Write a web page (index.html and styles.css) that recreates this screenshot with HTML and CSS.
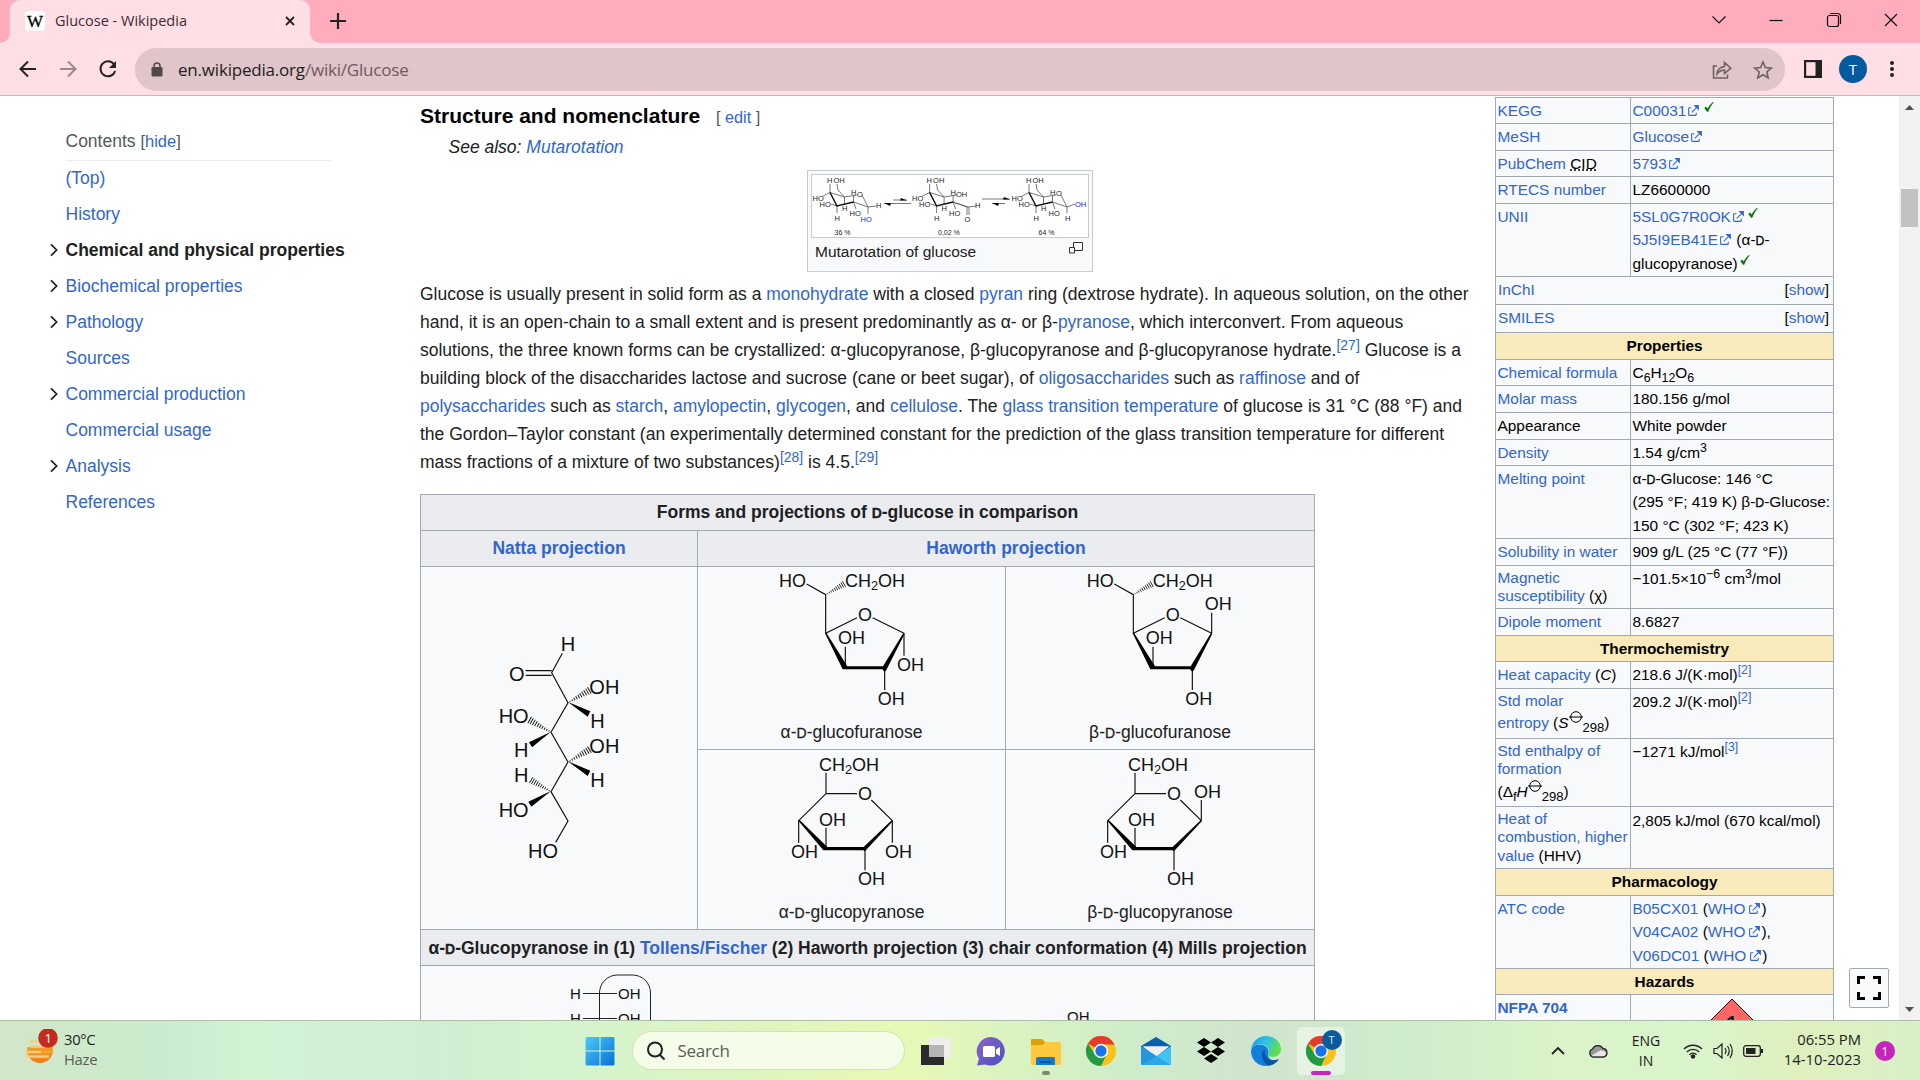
FILE: index.html
```html
<!DOCTYPE html>
<html lang="en">
<head>
<meta charset="utf-8">
<title>Glucose - Wikipedia</title>
<link rel="stylesheet" href="styles.css">
</head>
<body>
<svg class="defs" width="0" height="0" aria-hidden="true">
  <defs>
    <symbol id="ext" viewBox="0 0 12 12"><path fill="#36c" d="M6 1h5v5L8.86 3.85 4.7 8 4 7.3l4.15-4.16zM2 3h2v1H2v6h6V8h1v2a1 1 0 0 1-1 1H2a1 1 0 0 1-1-1V4a1 1 0 0 1 1-1"/></symbol>
    <symbol id="tick" viewBox="0 0 10 10"><path fill="#0a7a0a" d="M.3 6 2 4.400 3.600 6.600 C5 4 6.600 1.800 8.800 0 L9.700.4 C7.400 3.200 5.600 6 4.200 9.800 L3 9.800z"/></symbol>
    <symbol id="chev" viewBox="0 0 10 16"><path fill="none" stroke="#202122" stroke-width="2" d="M1.500 1.500 8 8 1.500 14.500"/></symbol>
    <g id="hash"><path stroke="#111" stroke-width="2.800" d="M7-2V2M14.500-3V3M22-4V4M29.500-5V5M37-6V6M44.500-7V7M52-8V8M59.500-9V9M67-10V10M74-11V11"/></g>
    <g id="furanose" class="haworth">
      <text x="1107" y="290">HO</text><text x="1305" y="290">CH<tspan class="sub" dy="9">2</tspan><tspan dy="-9">OH</tspan></text>
      <text x="1344" y="394">O</text><text x="1284" y="463">OH</text><text x="1403" y="645">OH</text>
      <path class="bond" d="M1190 282 1247 314V430L1341 383M1388 383 1482 430M1306 470V533M1424 535V600"/>
      <use href="#hash" transform="translate(1247 314) rotate(-30) scale(.86)"/>
      <path class="wedge" d="M1245 430 1249 428 1312 529H1419L1480 429 1484 431 1429 540 1424 546 1417 538H1298z"/>
    </g>
    <g id="pyranose" class="haworth">
      <text x="1227" y="842">CH<tspan class="sub" dy="9">2</tspan><tspan dy="-9">OH</tspan></text>
      <text x="1344" y="930">O</text><text x="1227" y="1007">OH</text><text x="1143" y="1103">OH</text><text x="1344" y="1186">OH</text>
      <path class="bond" d="M1248 848V911H1341M1384 930 1447 992M1248 911 1166 992V1058M1248 1013V1074M1365 1076V1141"/>
      <path class="wedge" d="M1165 992 1169 990 1252 1071H1361L1445 991 1449 993 1371 1077 1365 1084 1360 1081H1240z"/>
    </g>
    <g id="chair" class="chair">
      <text x="827" y="183">H</text><text x="833.500" y="182.500">OH</text><text x="812.500" y="200.500">HO</text><text x="819.500" y="207">HO</text>
      <text x="834.500" y="220.500">H</text><text x="842" y="211">H</text><text x="849.500" y="216">HO</text><text x="851" y="194.500">H</text>
      <path class="thin" d="M830 184V192.500M837 184 838 190 844.500 197 830 192.500 823 196M844.500 197V205M853.500 195V202L856 209M853.500 202 868 207M837 206V213M837 206 831 204M844.500 197 857 195"/>
      <path class="thick" d="M830 192.500 837 206 853.500 202"/>
    </g>
    <g id="chromeLogo">
      <circle cx="15" cy="15" r="15" fill="#fbc116"/>
      <path fill="#e33b2e" d="M15 15 2 7.500A15 15 0 0 1 28 7.500L28.500 8.500H15z"/>
      <path fill="#239a46" d="M2 7.500A15 15 0 0 0 15 30L20.600 18.500 15 15 8.500 18z"/>
      <circle cx="15" cy="15" r="7.200" fill="#fff"/><circle cx="15" cy="15" r="5.700" fill="#1a73e8"/>
    </g>
  </defs>
</svg>

<header class="tabs">
  <div class="tab">
    <svg class="favicon" viewBox="0 0 20 20"><rect width="20" height="20" rx="3.500" fill="#fff"/><text x="10" y="15.500" text-anchor="middle">W</text></svg>
    <span class="tab-title">Glucose - Wikipedia</span>
    <svg width="10" height="10" viewBox="0 0 10 10"><path d="M1 1 9 9M9 1 1 9" stroke="#222" stroke-width="1.800"/></svg>
  </div>
  <svg class="plus" width="16" height="16" viewBox="0 0 16 16"><path d="M8 0V16M0 8H16" stroke="#222" stroke-width="2.200"/></svg>
  <div class="window-buttons">
    <svg viewBox="0 0 16 16"><path d="M1.500 4.500 8 11 14.500 4.500"/></svg>
    <svg viewBox="0 0 16 16"><path d="M1.500 8.500H14.500"/></svg>
    <svg viewBox="0 0 16 16"><rect x="1.500" y="3.500" width="11" height="11" rx="2"/><path d="M4 1.500H11.500A3 3 0 0 1 14.500 4.500V12"/></svg>
    <svg viewBox="0 0 16 16"><path d="M2 2 14 14M14 2 2 14"/></svg>
  </div>
</header>
<nav class="toolbar">
  <svg class="nav-icon" viewBox="0 0 20 20"><path d="M18 10H3M10 2.500 2.500 10 10 17.500"/></svg>
  <svg class="nav-icon faded" viewBox="0 0 20 20"><path d="M2 10H17M10 2.500 17.500 10 10 17.500"/></svg>
  <svg class="nav-icon" viewBox="0 0 20 20"><path d="M16 5.200A7.500 7.500 0 1 0 17.200 12"/><path d="M18 2V9H11z" fill="#222" stroke="none"/></svg>
  <div class="omnibox">
    <svg class="lock" viewBox="0 0 12 15"><rect x=".5" y="5" width="11" height="9.500" rx="1.300" fill="#50494c"/><path d="M3 6V4a3 3 0 0 1 6 0V6" fill="none" stroke="#50494c" stroke-width="1.500"/></svg>
    <span class="url">en.wikipedia.org<span>/wiki/Glucose</span></span>
    <svg class="share" viewBox="0 0 20 18"><path d="M5 5H1.500V17H15.500V13.500M5 13C5.500 8.500 8 6 12.500 5.500V1.500L18.800 7.200 12.500 12.500V9C9 9 7 10.500 5 13z"/></svg>
    <svg class="star" viewBox="0 0 20 20"><path d="M10 2 12.400 7.500 18.300 8.100 13.800 12 15.200 17.900 10 14.800 4.800 17.900 6.200 12 1.700 8.100 7.600 7.500z"/></svg>
  </div>
  <svg class="panel" viewBox="0 0 18 18"><path fill="#222" d="M0 0H18V18H0z"/><path fill="#ffdfe5" d="M2.200 2.200H11.500V15.800H2.200z"/></svg>
  <span class="avatar">T</span>
  <svg class="dots" viewBox="0 0 6 18"><circle cx="3" cy="3" r="2"/><circle cx="3" cy="9" r="2"/><circle cx="3" cy="15" r="2"/></svg>
</nav>

<main class="page">
  <aside class="toc">
    <div class="toc-head">Contents <span>[<a>hide</a>]</span></div>
    <ul>
      <li><i></i><a>(Top)</a></li>
      <li><i></i><a>History</a></li>
      <li class="current"><i><svg><use href="#chev"/></svg></i>Chemical and physical properties</li>
      <li><i><svg><use href="#chev"/></svg></i><a>Biochemical properties</a></li>
      <li><i><svg><use href="#chev"/></svg></i><a>Pathology</a></li>
      <li><i></i><a>Sources</a></li>
      <li><i><svg><use href="#chev"/></svg></i><a>Commercial production</a></li>
      <li><i></i><a>Commercial usage</a></li>
      <li><i><svg><use href="#chev"/></svg></i><a>Analysis</a></li>
      <li><i></i><a>References</a></li>
    </ul>
  </aside>

  <article class="article">
    <h3>Structure and nomenclature <span>[ <a>edit</a> ]</span></h3>
    <div class="hatnote">See also: <a>Mutarotation</a></div>
    <figure>
      <svg class="thumb" viewBox="812 175 276 62">
        <use href="#chair"/><use href="#chair" x="99.600"/><use href="#chair" x="199"/>
        <path class="thin" d="M862 195 868 207 876 206M868 207V214M1061 195 1067 207 1075 204M1067 207V213M952.500 202 968 207 976 206M967 207V215M969 207V215M893 200H907M911 203.500H884M982 199H1010M1005 203.500H992"/>
        <path d="M907 200.500H900L901 198zM884 203H891L890 206zM1010 199.500H1003L1004 197zM992 203H999L998 206z"/>
        <g class="chair">
        <text x="857" y="196.500">O</text><text x="876" y="208">H</text><text x="860.500" y="221.500" class="blue">HO</text>
        <text x="956" y="196.500">OH</text><text x="975" y="208">H</text><text x="964.500" y="221.500">O</text>
        <text x="1056" y="195.500">O</text><text x="1065" y="220.500">H</text><text x="1075" y="207" class="blue">OH</text>
        <text x="834.500" y="235" class="pct">36 %</text><text x="938" y="235" class="pct">0,02 %</text><text x="1038.500" y="235" class="pct">64 %</text>
        </g>
      </svg>
      <figcaption>Mutarotation of glucose
        <svg width="14" height="12" viewBox="0 0 14 12" fill="#f8f9fa" stroke="#333"><path d="M4.500.5H13.500V8.500H4.500z"/><path d="M.5 5.500H5.500V11H.5z"/></svg>
      </figcaption>
    </figure>
    <p>Glucose is usually present in solid form as a <a>monohydrate</a> with a closed <a>pyran</a> ring (dextrose hydrate). In aqueous solution, on the other<br>
    hand, it is an open-chain to a small extent and is present predominantly as α- or β-<a>pyranose</a>, which interconvert. From aqueous<br>
    solutions, the three known forms can be crystallized: α-glucopyranose, β-glucopyranose and β-glucopyranose hydrate.<sup>[27]</sup> Glucose is a<br>
    building block of the disaccharides lactose and sucrose (cane or beet sugar), of <a>oligosaccharides</a> such as <a>raffinose</a> and of<br>
    <a>polysaccharides</a> such as <a>starch</a>, <a>amylopectin</a>, <a>glycogen</a>, and <a>cellulose</a>. The <a>glass transition temperature</a> of glucose is 31 °C (88 °F) and<br>
    the Gordon–Taylor constant (an experimentally determined constant for the prediction of the glass transition temperature for different<br>
    mass fractions of a mixture of two substances)<sup>[28]</sup> is 4.5.<sup>[29]</sup></p>

    <section class="forms">
      <div class="th wide">Forms and projections of <small>D</small>-glucose in comparison</div>
      <div class="th"><a>Natta projection</a></div>
      <div class="th span2"><a>Haworth projection</a></div>
      <div class="td natta">
        <svg width="276" height="362" viewBox="33 231 828 1086">
          <text x="452" y="484">H</text><text x="297" y="572">O</text><text x="538" y="611">OH</text><text x="541" y="713">H</text>
          <text x="266" y="699">HO</text><text x="312" y="802">H</text><text x="538" y="788">OH</text><text x="541" y="891">H</text>
          <text x="312" y="876">H</text><text x="266" y="980">HO</text><text x="354" y="1105">HO</text>
          <path class="bond" d="M457 490 425 548 474 638 423 727 474 816 423 905 474 993 437 1057M347 542H425M347 556H425"/>
          <path class="wedge" d="M474 636 541 664 533 680zM423 725 357 757 366 772zM474 814 541 842 533 858zM423 903 355 935 364 950z"/>
          <use href="#hash" transform="translate(474 638) rotate(-30)"/><use href="#hash" transform="translate(423 727) rotate(210)"/>
          <use href="#hash" transform="translate(474 816) rotate(-30)"/><use href="#hash" transform="translate(423 905) rotate(210) scale(.93)"/>
        </svg>
      </div>
      <div class="td"><svg class="haworth" width="307" height="150" viewBox="864 231 921 450"><use href="#furanose"/><path class="bond" d="M1482 430V497"/><text x="1461" y="543">OH</text></svg>
        <span>α-<small>D</small>-glucofuranose</span></div>
      <div class="td"><svg class="haworth" width="308" height="150" viewBox="865 231 924 450"><use href="#furanose"/><path class="bond" d="M1482 430V368"/><text x="1461" y="361">OH</text></svg>
        <span>β-<small>D</small>-glucofuranose</span></div>
      <div class="td"><svg class="haworth" width="307" height="147" viewBox="864 780 921 441"><use href="#pyranose"/><path class="bond" d="M1447 992V1058"/><text x="1425" y="1103">OH</text></svg>
        <span>α-<small>D</small>-glucopyranose</span></div>
      <div class="td"><svg class="haworth" width="308" height="147" viewBox="861 780 924 441"><use href="#pyranose"/><path class="bond" d="M1447 992V930"/><text x="1425" y="924">OH</text></svg>
        <span>β-<small>D</small>-glucopyranose</span></div>
      <div class="th wide last">α-<small>D</small>-Glucopyranose in (1)&nbsp;<a>Tollens/Fischer</a>&nbsp;(2) Haworth projection (3) chair conformation (4) Mills projection</div>
      <div class="td wide"><svg class="fischer" width="893" height="54" viewBox="421 966 893 54">
        <rect x="599.500" y="975" width="51" height="90" rx="18" fill="none" stroke="#222"/>
        <path d="M583 993.500H617M583 1018.500H617" stroke="#222"/>
        <text x="570" y="999">H</text><text x="618" y="999">OH</text><text x="570" y="1024">H</text><text x="618" y="1024">OH</text><text x="1067" y="1022">OH</text>
      </svg></div>
    </section>
  </article>

  <aside class="infobox">
    <div class="row" style="height:26px"><div><a>KEGG</a></div><div><a>C00031</a><svg class="ext"><use href="#ext"/></svg> <svg class="tick"><use href="#tick"/></svg></div></div>
    <div class="row" style="height:27px"><div><a>MeSH</a></div><div><a>Glucose</a><svg class="ext"><use href="#ext"/></svg></div></div>
    <div class="row" style="height:26px"><div><a>PubChem</a> <abbr>CID</abbr></div><div><a>5793</a><svg class="ext"><use href="#ext"/></svg></div></div>
    <div class="row" style="height:27px"><div><a>RTECS number</a></div><div>LZ6600000</div></div>
    <div class="row" style="height:73px"><div><a>UNII</a></div><div><a>5SL0G7R0OK</a><svg class="ext"><use href="#ext"/></svg> <svg class="tick"><use href="#tick"/></svg><br><a>5J5I9EB41E</a><svg class="ext"><use href="#ext"/></svg> (α-<small>D</small>-<br>glucopyranose)<svg class="tick close"><use href="#tick"/></svg></div></div>
    <div class="row fold" style="height:28px"><a>InChI</a><span>[<a>show</a>]</span></div>
    <div class="row fold" style="height:28px"><a>SMILES</a><span>[<a>show</a>]</span></div>
    <div class="row title" style="height:27px">Properties</div>
    <div class="row" style="height:26px"><div><a>Chemical formula</a></div><div>C<sub>6</sub>H<sub>12</sub>O<sub>6</sub></div></div>
    <div class="row" style="height:27px"><div><a>Molar mass</a></div><div>180.156 g/mol</div></div>
    <div class="row" style="height:27px"><div>Appearance</div><div>White powder</div></div>
    <div class="row" style="height:26px"><div><a>Density</a></div><div>1.54 g/cm<sup>3</sup></div></div>
    <div class="row" style="height:73px"><div><a>Melting point</a></div><div>α-<small>D</small>-Glucose: 146 °C<br>(295 °F; 419 K) β-<small>D</small>-Glucose:<br>150 °C (302 °F; 423 K)</div></div>
    <div class="row" style="height:27px"><div><a>Solubility in water</a></div><div>909 g/L (25 °C (77 °F))</div></div>
    <div class="row multi" style="height:43px"><div><a>Magnetic<br>susceptibility</a> (χ)</div><div>−101.5×10<sup>−6</sup> cm<sup>3</sup>/mol</div></div>
    <div class="row" style="height:27px"><div><a>Dipole moment</a></div><div>8.6827</div></div>
    <div class="row title" style="height:26px">Thermochemistry</div>
    <div class="row" style="height:27px"><div><a>Heat capacity</a> (<em>C</em>)</div><div>218.6 J/(K·mol)<sup><a>[2]</a></sup></div></div>
    <div class="row multi" style="height:50px"><div><a>Std molar</a><p class="low"><a>entropy</a> (<em>S</em><svg class="std" viewBox="0 0 14 14"><circle cx="7" cy="7" r="5.300"/><path d="M0 7H14"/></svg><sub>298</sub>)</p></div><div>209.2 J/(K·mol)<sup><a>[2]</a></sup></div></div>
    <div class="row multi" style="height:68px"><div><a>Std enthalpy of<br>formation</a><p class="low">(Δ<sub>f</sub><em>H</em><svg class="std" viewBox="0 0 14 14"><circle cx="7" cy="7" r="5.300"/><path d="M0 7H14"/></svg><sub>298</sub>)</p></div><div>−1271 kJ/mol<sup><a>[3]</a></sup></div></div>
    <div class="row multi" style="height:62px"><div><a>Heat of<br>combustion, higher<br>value</a> (HHV)</div><div class="lower">2,805 kJ/mol (670 kcal/mol)</div></div>
    <div class="row title" style="height:27px">Pharmacology</div>
    <div class="row" style="height:73px"><div><a>ATC code</a></div><div><a>B05CX01</a> (<a>WHO</a><svg class="ext who"><use href="#ext"/></svg>)<br><a>V04CA02</a> (<a>WHO</a><svg class="ext who"><use href="#ext"/></svg>),<br><a>V06DC01</a> (<a>WHO</a><svg class="ext who"><use href="#ext"/></svg>)</div></div>
    <div class="row title" style="height:26px">Hazards</div>
    <div class="row" style="height:60px"><div><a><b>NFPA 704</b></a></div><div class="nfpa"><svg width="70" height="70" viewBox="0 0 70 70"><path d="M35 1 69 35 35 69 1 35z" fill="#f66" stroke="#111"/><text x="35" y="36" text-anchor="middle">1</text></svg></div></div>
  </aside>

  <div class="scrollbar"><svg viewBox="0 0 9 5"><path d="M0 5 4.500 0 9 5z"/></svg><span></span><svg viewBox="0 0 9 5"><path d="M0 0 4.500 5 9 0z"/></svg></div>
  <button class="full"><svg width="24" height="24" viewBox="0 0 24 24"><path d="M1.500 8V1.500H8M16 1.500H22.500V8M22.500 16V22.500H16M8 22.500H1.500V16"/></svg></button>
</main>

<footer class="taskbar">
  <div class="weather">
    <svg width="36" height="40" viewBox="0 0 36 40"><defs><linearGradient id="sun" x2="0" y2="1"><stop stop-color="#f7b52c"/><stop offset="1" stop-color="#f0781c"/></linearGradient></defs><circle cx="17" cy="21" r="13" fill="url(#sun)"/><path d="M0 5H28V18H4z" fill="#cfe7c9"/><path d="M7 12.500H14M7 17.500H22M2 23H19M3 27.500H26" stroke="#f5ce80" stroke-width="2.600"/><path d="M18 23H30" stroke="#f2a32a" stroke-width="2.500"/><circle cx="25" cy="9" r="9.800" fill="#c42b1c"/><text x="25" y="14" text-anchor="middle">1</text></svg>
    <div>30°C<br><span>Haze</span></div>
  </div>
  <div class="apps">
    <svg class="app" viewBox="0 0 30 30"><defs><linearGradient id="win" x2="1" y2="1"><stop stop-color="#4cc9fa"/><stop offset="1" stop-color="#0571d2"/></linearGradient></defs><path fill="url(#win)" d="M.5 2.500Q.5 1 2 1H14.500V14.500H.5zM15.500 1H28Q29.500 1 29.500 2.500V14.500H15.500zM.5 15.500H14.500V29.500H2Q.5 29.500.5 28zM15.500 15.500H29.500V28Q29.500 29.500 28 29.500H15.500z"/></svg>
    <div class="search"><svg width="20" height="20" viewBox="0 0 20 20"><circle cx="9" cy="8.500" r="7"/><path d="M13.500 13.500 18.500 18.500"/></svg>Search</div>
    <svg class="app" viewBox="0 0 30 30"><path fill="#2b2b2b" d="M0 9H23V29H0z"/><path fill="#eee" d="M8 1H30V21H8z"/><path fill="#b5b5b5" d="M8 9H23V21H8z"/></svg>
    <svg class="app" viewBox="0 0 30 30"><defs><linearGradient id="chat" x2="1" y2="1"><stop stop-color="#8a63c9"/><stop offset="1" stop-color="#4a52c4"/></linearGradient></defs><path fill="url(#chat)" d="M15 1A14.300 14.300 0 1 1 9 28.500L1 29.500 3 23A14.300 14.300 0 0 1 15 1z"/><rect x="7" y="10" width="12" height="11" rx="1.500" fill="#fff"/><path d="M20 13.500 24 11V20L20 17.500z" fill="#fff"/></svg>
    <div class="stack"><svg class="app" viewBox="0 0 30 30"><path fill="#dfa008" d="M0 4Q0 3 1 3H11L14 6V12H0z"/><path fill="#ffc83d" d="M0 9H12L15 6H29Q30 6 30 7V28Q30 29 29 29H1Q0 29 0 28z"/><path fill="#1379d0" d="M5 29V23Q5 21 7 21H22Q24 21 24 23V29z"/><path stroke="#0a4f94" stroke-width="1.600" d="M9 26H20"/></svg><em></em></div>
    <svg class="app" viewBox="0 0 30 30"><use href="#chromeLogo"/></svg>
    <svg class="app" viewBox="0 0 30 30"><path fill="#0560ad" d="M0 10 15 1 30 10V20H0z"/><path fill="#f1eff0" d="M1.500 10.300H28.500L15 21z"/><path fill="#2396e0" d="M0 10.300 30 29H1Q0 29 0 28z"/><path fill="#41c4f5" d="M30 10.300 16 19.700 30 29z"/><path fill="#2fa6ea" d="M16 19.700 30 29H1z"/></svg>
    <svg class="app" viewBox="0 0 30 30"><path d="M8 2 15 6.500 8 11 1 6.500zM22 2 29 6.500 22 11 15 6.500zM8 11 15 15.500 8 20 1 15.500zM22 11 29 15.500 22 20 15 15.500zM15 18 22 22.500 15 27 8 22.500z"/></svg>
    <svg class="app" viewBox="0 0 30 30"><defs><linearGradient id="edge" y2=".4"><stop stop-color="#1b93e0"/><stop offset=".5" stop-color="#30bfe8"/><stop offset="1" stop-color="#5fe04e"/></linearGradient></defs><path fill="#0f7fdb" d="M0 15C1 9 6 8 11 9 16 10 18 13 17.500 17 16 22 20 26 27.500 23.500 24 28 20 30 15 30 6 30 0 23 0 15z"/><path fill="url(#edge)" d="M0 14C1 5 8 0 15 0 24 0 30 6.500 30 13 30 18 26 21 21.500 21 18.500 21 16.500 19.500 17.500 18 19.500 14.500 17 9.500 10.500 8.500 5.500 8 1.500 10 0 14z"/><path fill="#0d52a3" d="M12.500 14C9 19 12 28 18 29.500 22 29 26 26.500 28 23 20 26.500 12.500 22 14 14z"/></svg>
    <div class="active"><svg class="app" viewBox="0 0 30 30"><use href="#chromeLogo"/></svg><b>T</b><em></em></div>
  </div>
  <div class="tray">
    <svg class="t-up" width="14" height="9" viewBox="0 0 14 9"><path d="M1 8 7 2 13 8" stroke-width="1.800"/></svg>
    <svg class="t-cloud" width="20" height="14" viewBox="0 0 20 14"><path fill="#999" stroke="#222" stroke-width="1.300" d="M5 13A4.200 4.200 0 0 1 4.500 5 6 6 0 0 1 15 4.500 4.300 4.300 0 0 1 15.500 13z"/><path fill="#e8e8e8" stroke="none" d="M3 12 12 6.500Q17 6 18 9.500 17.500 12 15 12.300H5z"/></svg>
    <div class="lang">ENG<br>IN</div>
    <svg class="t-wifi" width="20" height="16" viewBox="0 0 20 16"><path d="M1 6A12.700 12.700 0 0 1 19 6M3.800 9A8.700 8.700 0 0 1 16.200 9M6.500 11.700A5 5 0 0 1 13.500 11.700" stroke-width="1.400"/><circle cx="10" cy="13.500" r="1.800" fill="#222"/></svg>
    <svg class="t-vol" width="20" height="16" viewBox="0 0 20 16"><path d="M1 5.500H4L9 1V15L4 10.500H1zM12 5Q14 8 12 11M14.500 3Q18 8 14.500 13M17 1Q21.500 8 17 15" stroke-width="1.200"/></svg>
    <svg class="t-bat" width="21" height="12" viewBox="0 0 21 12"><rect x=".7" y=".7" width="16.600" height="10.600" rx="2.200" stroke-width="1.300"/><path fill="#222" stroke="none" d="M3 3H12.500V9H3zM18 4H20V8H18z"/></svg>
    <div class="clock">06:55 PM<br>14-10-2023</div>
    <span class="note">1</span>
  </div>
</footer>
</body>
</html>
```
FILE: styles.css
```css
* { box-sizing: border-box; }
body { margin: 0; width: 1920px; height: 1080px; overflow: hidden; display: flex; flex-direction: column; background: #fff; color: #202122; font: 17.5px/28px "Liberation Sans", Arial, sans-serif; }
a { color: #36c; text-decoration: none; }
svg { flex: none; display: block; }
.defs { position: absolute; }

/* browser chrome */
.tabs { height: 43px; flex: none; background: #ffadbc; display: flex; align-items: center; padding: 0 0 2px 10px; font-family: "Open Sans", sans-serif; }
.tab { width: 300px; height: 43px; margin-bottom: -2px; background: #ffdfe5; border-radius: 10px 10px 0 0; display: flex; align-items: center; padding: 0 15px 2px; position: relative; }
.tab::before, .tab::after { content: ""; position: absolute; bottom: 0; width: 10px; height: 10px; }
.tab::before { left: -10px; background: radial-gradient(circle at 0 0, #ffadbc 9.5px, #ffdfe5 10px); }
.tab::after { right: -10px; background: radial-gradient(circle at 100% 0, #ffadbc 9.5px, #ffdfe5 10px); }
.favicon { width: 20px; height: 20px; }
.favicon text { font: 17px "Liberation Serif", serif; stroke: #000; stroke-width: .3; }
.tab-title { flex: 1; margin-left: 10px; font-size: 14.500px; color: #3c2c30; }
.plus { margin-left: 20px; }
.window-buttons { margin-left: auto; display: flex; gap: 41.300px; padding: 0 21px 2px 0; }
.window-buttons svg { width: 16px; height: 16px; fill: none; stroke: #111; stroke-width: 1.200; }
.toolbar { height: 53px; flex: none; background: #ffdfe5; border-bottom: 1px solid #cfb5ba; display: flex; align-items: center; padding-left: 18px; font-family: "Open Sans", sans-serif; }
.nav-icon { width: 20px; height: 20px; margin-right: 20px; fill: none; stroke: #222; stroke-width: 2; }
.nav-icon.faded { opacity: .45; }
.omnibox { width: 1650px; height: 43px; margin: 1px 0 0 -3px; border-radius: 22px; background: #e0c5ca; display: flex; align-items: center; padding: 0 12px 0 16px; }
.lock { width: 12px; height: 15px; }
.url { flex: 1; margin-left: 15px; font-size: 17px; letter-spacing: -.2px; color: #222; }
.url span { color: #6c5b5f; }
.share, .star { fill: none; stroke: #6c6265; stroke-width: 1.600; height: 20px; width: 20px; }
.star { margin-left: 21px; }
.panel { width: 18px; height: 18px; margin-left: 19px; }
.avatar { width: 28px; height: 28px; margin-left: 17px; border-radius: 50%; background: #035a9f; color: #fff; text-align: center; font-size: 15px; line-height: 28px; }
.dots { width: 6px; height: 18px; margin-left: 22px; fill: #222; }

.page { flex: 1; min-height: 0; display: flex; overflow: hidden; position: relative; }

/* contents list */
.toc { width: 420px; flex: none; padding: 31px 0 0 45.500px; }
.toc-head { margin-left: 20px; width: 265px; height: 34px; border-bottom: 1px solid #eaecf0; color: #54595d; white-space: nowrap; }
.toc-head span { font-size: 16.500px; }
.toc ul { list-style: none; margin: -1px 0 0; padding: 0; }
.toc li { height: 36px; line-height: 35px; display: flex; align-items: center; white-space: nowrap; }
.toc i { width: 20px; flex: none; }
.toc i svg { width: 10px; height: 14px; margin-left: 3px; }
.toc .current { font-weight: bold; }

/* article */
.article { width: 1075px; flex: none; white-space: nowrap; }
h3 { margin: 5px 0 0; height: 30px; font-size: 21px; line-height: 30px; color: #000; }
h3 span { font-size: 16.300px; font-weight: normal; color: #54595d; margin-left: 10px; }
.hatnote { margin-left: 28.500px; height: 39px; line-height: 33px; font-style: italic; }
figure { margin: 0 0 0 387px; width: 286px; height: 102px; padding: 3px; background: #f8f9fa; border: 1px solid #c8ccd1; }
.thumb { width: 278px; height: 64px; border: 1px solid #c8ccd1; background: #fff; }
.chair text { font: 7.500px "Liberation Sans", sans-serif; fill: #222; }
.chair text.blue { fill: #22f; }
.chair text.pct { font-size: 7px; }
.thin { fill: none; stroke: #555; stroke-width: .8; }
.thick { fill: none; stroke: #111; stroke-width: 1.500; }
figcaption { display: flex; justify-content: space-between; padding: 0 6px 0 4px; font-size: 15.500px; line-height: 28px; }
figcaption svg { margin-top: 4px; }
.article > p { margin: 8px 0 0; height: 214px; }
sup, sub, small { line-height: 0; }
sup { font-size: 80%; vertical-align: 6px; }
.article sup { color: #36c; }
sub { font-size: 80%; vertical-align: -4px; }
small { font-size: .8em; font-weight: inherit; -webkit-text-stroke: .3px; }
.forms { width: 895px; display: grid; grid-template-columns: 277px 308px 309px; grid-template-rows: 36px 36px 183px 180px 36px 55px; border: solid #a2a9b1; border-width: 1px 0 0 1px; }
.forms > div { border: solid #a2a9b1; border-width: 0 1px 1px 0; }
.th { background: #eaecf0; font-weight: bold; text-align: center; line-height: 35px; }
.forms > .last { line-height: 36px; }
.td { background: #f8f9fa; display: flex; flex-direction: column; }
.td > span { text-align: center; line-height: 30px; }
.wide { grid-column: span 3; }
.span2 { grid-column: span 2; }
.natta { grid-row: span 2; }
.haworth text, .natta text { font: 54px "Liberation Sans", sans-serif; fill: #111; }
.natta text { font-size: 60px; }
.haworth text .sub { font-size: 38px; }
.fischer text { font: 15px "Liberation Sans", sans-serif; fill: #111; }
.bond { fill: none; stroke: #111; stroke-width: 3.500; }
.wedge { fill: #000; }

/* chemical infobox */
.infobox { width: 339px; flex: none; margin-top: 1px; border: solid #a2a9b1; border-width: 1px 0 0 1px; background: #f8f9fa; color: #000; font-size: 15.400px; white-space: nowrap; }
.row { display: flex; border: solid #a2a9b1; border-width: 0 1px 1px 0; }
.row > div { padding: 1px 0 0 1.500px; line-height: 23.300px; width: 202px; }
.row > div:first-child { width: 135px; flex: none; padding: 4px 0 0 1.500px; border-right: 1px solid #a2a9b1; line-height: 18.700px; }
.row.multi > div:first-child { padding-top: 2.500px; }
.row > .lower { padding-top: 2px; }
.row.fold { justify-content: space-between; padding: 0 4px 0 2px; line-height: 25px; }
.row.title { background: #f8eaba; justify-content: center; font-weight: bold; line-height: 26px; }
.infobox svg { display: inline-block; }
.ext { width: 13px; height: 13px; margin-left: 1px; vertical-align: -1px; }
.who { margin-left: 3px; }
.tick { width: 10px; height: 10px; vertical-align: 4px; margin-left: -1px; }
.close { margin-left: 2px; }
abbr { text-decoration: underline dotted; }
.low { margin: 0; line-height: 18px; }
.std { width: 14px; height: 14px; vertical-align: 4px; fill: none; stroke: #000; }
.low sub { font-size: 85%; }
.row > .nfpa { padding: 3px 0 0 66px; }
.nfpa text { font: 25px "Liberation Sans", sans-serif; }

.scrollbar { margin-left: auto; width: 21px; background: #f1f1f1; padding: 9px 0 8px; display: flex; flex-direction: column; align-items: center; justify-content: space-between; }
.scrollbar svg { width: 9px; height: 5px; fill: #505050; }
.scrollbar span { width: 17px; height: 38px; background: #c1c1c1; margin: 79px 0 auto; }
.full { position: absolute; left: 1849px; top: 872px; width: 40px; height: 40px; padding: 7px; background: #f8f9fa; border: 1px solid #a2a9b1; border-radius: 2px; }
.full path { fill: none; stroke: #000; stroke-width: 3; }

/* taskbar */
.taskbar { height: 60px; flex: none; border-top: 1px solid #aebda5; display: flex; justify-content: space-between; background: linear-gradient(90deg, #d3e6c9 0, #caebcd 160px, #d3f3d5 250px, #cfeed3 430px, #d4f3cf 560px, #def5bd 760px, #e8f9b5 900px, #daf3c0 1010px, #ceeccb 1140px, #d1e4cd 1250px, #cfebcd 1400px, #daf3c8 1560px, #d9f4cb 1700px, #dff0bd 1800px, #d8f0c8 1920px); font: 14px/20px "Open Sans", sans-serif; color: #1c1c1c; }
.weather { display: flex; padding: 8px 0 0 23px; font-size: 14.800px; letter-spacing: -.3px; gap: 5px; }
.weather span { color: #555f50; }
.weather text { font-size: 13px; fill: #fff; }
.apps { position: absolute; left: 584.500px; height: 59px; display: flex; align-items: center; gap: 25px; }
.app { width: 30px; height: 30px; }
.search { width: 273px; height: 39px; margin: 0 -9px 0 -8px; border-radius: 20px; background: #f5fde9; border: 1px solid #cfe2b9; display: flex; align-items: center; gap: 12px; padding-left: 13px; font-size: 17px; letter-spacing: -.3px; color: #56604f; }
.search svg { fill: none; stroke: #222; stroke-width: 2; }
.stack { position: relative; }
.stack em { position: absolute; left: 11px; top: 35px; width: 8px; height: 4px; border-radius: 2px; background: #7c8a74; }
.active { position: relative; width: 48px; height: 48px; margin-left: -9px; padding: 9px; border-radius: 5px; background: #e6f3e3; }
.active b { position: absolute; left: 25px; top: 3px; width: 20px; height: 20px; border-radius: 50%; background: #0a5a9c; color: #d9e8f5; font-size: 11px; font-weight: normal; text-align: center; }
.active em { position: absolute; left: 14px; bottom: 0; width: 20px; height: 4px; border-radius: 2px; background: #c724be; }
.tray { display: flex; align-items: center; padding-right: 25px; text-align: center; }
.tray svg { fill: none; stroke: #222; }
.t-cloud { margin-left: 23px; }
.lang { margin-left: 23px; width: 30px; }
.t-wifi { margin-left: 22px; }
.t-vol { margin-left: 10px; }
.t-bat { margin-left: 10px; }
.clock { margin: -3px 0 0 19px; width: 78px; text-align: right; font-size: 14.800px; letter-spacing: 0; white-space: nowrap; }
.note { margin-left: 14px; width: 20px; height: 20px; border-radius: 50%; background: #c724be; color: #fff; font-size: 13px; }
```
